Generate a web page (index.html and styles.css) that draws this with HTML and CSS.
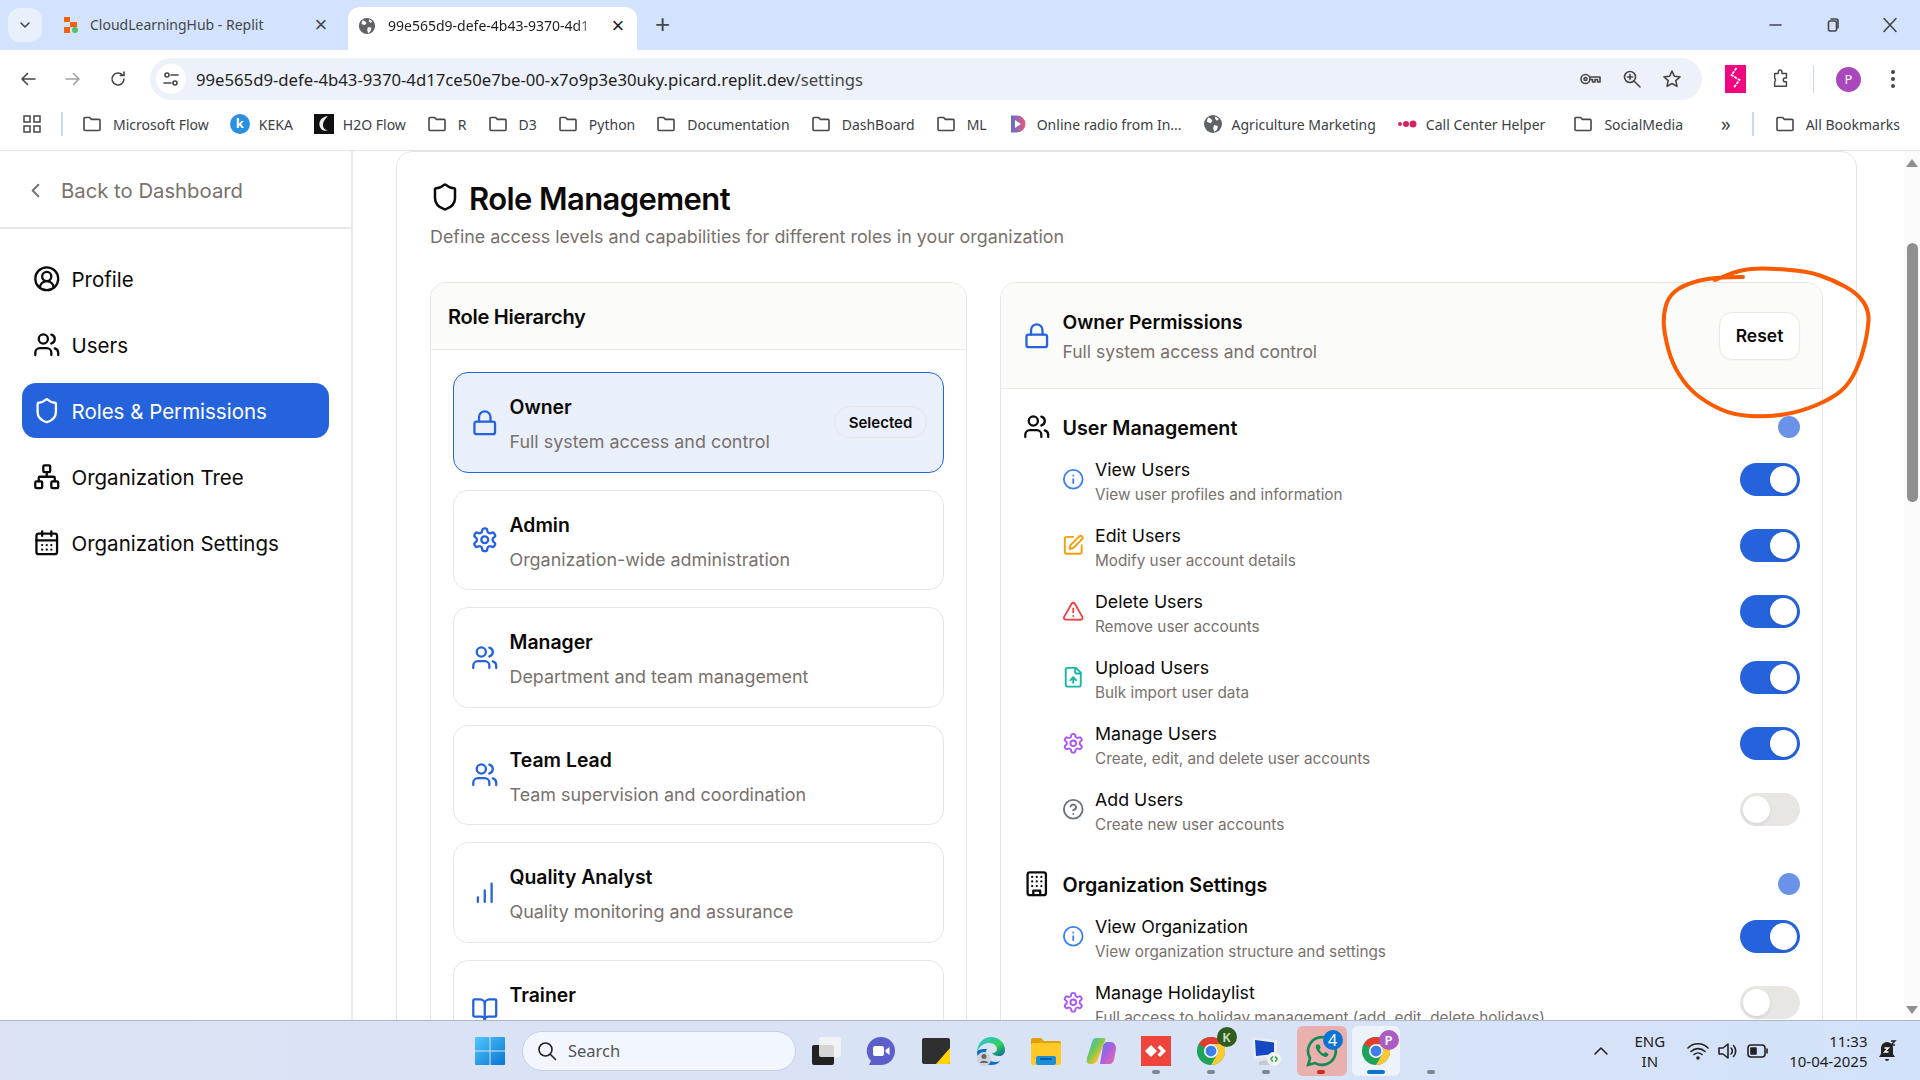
FILE: index.html
```html
<!DOCTYPE html>
<html lang="en">
<head>
<meta charset="utf-8">
<title>Role Management</title>
<link rel="stylesheet" href="styles.css">
</head>
<body>
<svg class="defs" width="0" height="0" aria-hidden="true">
  <symbol id="i-shield" viewBox="0 0 24 24"><path d="M20 13c0 5-3.5 7.5-7.66 8.95a1 1 0 0 1-.67-.01C7.5 20.5 4 18 4 13V6a1 1 0 0 1 1-1c2 0 4.5-1.2 6.24-2.72a1.17 1.17 0 0 1 1.52 0C14.51 3.81 17 5 19 5a1 1 0 0 1 1 1z"/></symbol>
  <symbol id="i-users" viewBox="0 0 24 24"><path d="M16 21v-2a4 4 0 0 0-4-4H6a4 4 0 0 0-4 4v2"/><circle cx="9" cy="7" r="4"/><path d="M22 21v-2a4 4 0 0 0-3-3.87"/><path d="M16 3.13a4 4 0 0 1 0 7.75"/></symbol>
  <symbol id="i-profile" viewBox="0 0 24 24"><path d="M18 20a6 6 0 0 0-12 0"/><circle cx="12" cy="10" r="4"/><circle cx="12" cy="12" r="10"/></symbol>
  <symbol id="i-network" viewBox="0 0 24 24"><rect x="16" y="16" width="6" height="6" rx="1"/><rect x="2" y="16" width="6" height="6" rx="1"/><rect x="9" y="2" width="6" height="6" rx="1"/><path d="M5 16v-3a1 1 0 0 1 1-1h12a1 1 0 0 1 1 1v3"/><path d="M12 12V8"/></symbol>
  <symbol id="i-calendar" viewBox="0 0 24 24"><path d="M8 2v4M16 2v4"/><rect x="3" y="4" width="18" height="18" rx="2"/><path d="M3 10h18M8 14h.01M12 14h.01M16 14h.01M8 18h.01M12 18h.01M16 18h.01"/></symbol>
  <symbol id="i-chevron" viewBox="0 0 24 24"><path d="m15 18-6-6 6-6"/></symbol>
  <symbol id="i-lock" viewBox="0 0 24 24"><rect x="3" y="11" width="18" height="11" rx="2" ry="2"/><path d="M7 11V7a5 5 0 0 1 10 0v4"/></symbol>
  <symbol id="i-gear" viewBox="0 0 24 24"><path d="M12.22 2h-.44a2 2 0 0 0-2 2v.18a2 2 0 0 1-1 1.73l-.43.25a2 2 0 0 1-2 0l-.15-.08a2 2 0 0 0-2.73.73l-.22.38a2 2 0 0 0 .73 2.73l.15.1a2 2 0 0 1 1 1.72v.51a2 2 0 0 1-1 1.74l-.15.09a2 2 0 0 0-.73 2.73l.22.38a2 2 0 0 0 2.73.73l.15-.08a2 2 0 0 1 2 0l.43.25a2 2 0 0 1 1 1.73V20a2 2 0 0 0 2 2h.44a2 2 0 0 0 2-2v-.18a2 2 0 0 1 1-1.73l.43-.25a2 2 0 0 1 2 0l.15.08a2 2 0 0 0 2.73-.73l.22-.39a2 2 0 0 0-.73-2.73l-.15-.08a2 2 0 0 1-1-1.74v-.5a2 2 0 0 1 1-1.74l.15-.09a2 2 0 0 0 .73-2.73l-.22-.38a2 2 0 0 0-2.73-.73l-.15.08a2 2 0 0 1-2 0l-.43-.25a2 2 0 0 1-1-1.73V4a2 2 0 0 0-2-2z"/><circle cx="12" cy="12" r="3"/></symbol>
  <symbol id="i-bars" viewBox="0 0 24 24"><path d="M12 20V10M18 20V4M6 20v-4"/></symbol>
  <symbol id="i-book" viewBox="0 0 24 24"><path d="M12 7v14"/><path d="M3 18a1 1 0 0 1-1-1V4a1 1 0 0 1 1-1h5a4 4 0 0 1 4 4 4 4 0 0 1 4-4h5a1 1 0 0 1 1 1v13a1 1 0 0 1-1 1h-6a3 3 0 0 0-3 3 3 3 0 0 0-3-3z"/></symbol>
  <symbol id="i-info" viewBox="0 0 24 24"><circle cx="12" cy="12" r="10"/><path d="M12 16v-4M12 8h.01"/></symbol>
  <symbol id="i-pen" viewBox="0 0 24 24"><path d="M12 3H5a2 2 0 0 0-2 2v14a2 2 0 0 0 2 2h14a2 2 0 0 0 2-2v-7"/><path d="M18.375 2.625a1 1 0 0 1 3 3l-9.013 9.014a2 2 0 0 1-.853.505l-2.873.84a.5.5 0 0 1-.62-.62l.84-2.873a2 2 0 0 1 .506-.852z"/></symbol>
  <symbol id="i-alert" viewBox="0 0 24 24"><path d="m21.73 18-8-14a2 2 0 0 0-3.48 0l-8 14A2 2 0 0 0 4 21h16a2 2 0 0 0 1.73-3"/><path d="M12 9v4M12 17h.01"/></symbol>
  <symbol id="i-fileup" viewBox="0 0 24 24"><path d="M15 2H6a2 2 0 0 0-2 2v16a2 2 0 0 0 2 2h12a2 2 0 0 0 2-2V7Z"/><path d="M14 2v4a2 2 0 0 0 2 2h4"/><path d="M12 12v6M15 15l-3-3-3 3"/></symbol>
  <symbol id="i-help" viewBox="0 0 24 24"><circle cx="12" cy="12" r="10"/><path d="M9.09 9a3 3 0 0 1 5.83 1c0 2-3 3-3 3M12 17h.01"/></symbol>
  <symbol id="i-building" viewBox="0 0 24 24"><rect x="4" y="2" width="16" height="20" rx="2"/><path d="M9 22v-4h6v4M8 6h.01M16 6h.01M12 6h.01M12 10h.01M12 14h.01M16 10h.01M16 14h.01M8 10h.01M8 14h.01"/></symbol>
  <symbol id="b-folder" viewBox="0 0 20 20"><path d="M2 4.5a1 1 0 0 1 1-1h4.6l1.8 1.9H17a1 1 0 0 1 1 1v9.1a1 1 0 0 1-1 1H3a1 1 0 0 1-1-1z"/></symbol>
  <symbol id="b-globe" viewBox="0 0 20 20"><circle cx="10" cy="10" r="9" fill="#5f6368"/><path d="M5 3.5l3 1.2 1.5 2.3-2 2.2-3.7-1.5zM11 11l4 1-1.2 4-2.6 2-1-3.5zM12.5 2.5l3.4 2.6-2 1.6-2-2.2z" fill="#fff"/></symbol>
  <symbol id="t-chrome" viewBox="0 0 32 32"><circle cx="16" cy="16" r="15" fill="#1fa25a"/><path d="M16 1a15 15 0 0 1 13 7.5H16a7.5 7.5 0 0 0-6.5 3.75L3 8.5A15 15 0 0 1 16 1z" fill="#e33b2e"/><path d="M29 8.500a15 15 0 0 1-13 22.500l6.500-11.250A7.500 7.500 0 0 0 16 8.500z" fill="#fcc934"/><circle cx="16" cy="16" r="7.500" fill="#fff"/><circle cx="16" cy="16" r="5.800" fill="#3f7ee8"/></symbol>
</svg>

<header class="tabstrip">
  <div class="tab-menu"><svg class="stroke-dark w14" viewBox="0 0 14 14"><path d="M3 5l4 4 4-4"/></svg></div>
  <div class="tab tab-inactive">
    <svg class="favicon" viewBox="0 0 16 18"><path d="M1 1h6v5H1zM7 6h7v5H7zM1 11h6v6H1z" fill="#f26207"/><circle cx="12" cy="14" r="3" fill="#4ec06f"/></svg>
    <span class="tab-title">CloudLearningHub - Replit</span>
    <span class="tab-x">×</span>
  </div>
  <div class="tab tab-active">
    <svg class="favicon fav-globe"><use href="#b-globe"/></svg>
    <span class="tab-title tab-fade">99e565d9-defe-4b43-9370-4d1</span>
    <span class="tab-x tab-x-dark">×</span>
  </div>
  <span class="tab-new">+</span>
  <div class="win-ctrls">
    <svg class="stroke-dark win-ic" viewBox="0 0 16 16"><path d="M2 8h11"/></svg>
    <svg class="stroke-dark win-ic" viewBox="0 0 16 16"><rect x="3.500" y="4" width="8" height="10" rx="1.500"/><path d="M6 2h5a2 2 0 0 1 2 2v7"/></svg>
    <svg class="stroke-dark win-ic" viewBox="0 0 16 16"><path d="M2 1.500l12 13M14 1.500l-12 13"/></svg>
  </div>
</header>

<div class="toolbar">
  <div class="nav-btns">
    <svg class="stroke-dark w20" viewBox="0 0 20 20"><path d="M17 10H4M9.500 4.500L4 10l5.500 5.500"/></svg>
    <svg class="stroke-grey w20" viewBox="0 0 20 20"><path d="M3 10h13M10.500 4.500L16 10l-5.500 5.500"/></svg>
    <svg class="stroke-dark w20" viewBox="0 0 20 20"><path d="M16 6.500V3M16 6.500h-3.500M16 10a6 6 0 1 1-1.600-4.100L16 6.500"/></svg>
  </div>
  <div class="omnibox">
    <span class="chip"><svg class="stroke-dark w18" viewBox="0 0 18 18"><circle cx="5" cy="5" r="2"/><path d="M9 5h7M2 13h7"/><circle cx="13" cy="13" r="2"/></svg></span>
    <span class="url">99e565d9-defe-4b43-9370-4d17ce50e7be-00-x7o9p3e30uky.picard.replit.dev<span class="url-path">/settings</span></span>
    <span class="omni-icons">
      <svg class="stroke-dark w24" viewBox="0 0 24 24"><circle cx="7.500" cy="12" r="4.500"/><circle cx="7.500" cy="12" r="1.500"/><path d="M12 10h10v5h-2.500v-2.500H17V15h-2.500v-2.500H12"/></svg>
      <svg class="stroke-dark w20" viewBox="0 0 20 20"><circle cx="8" cy="8" r="5.500"/><path d="M12 12l6 6M5.500 8h5M8 5.500v5"/></svg>
      <svg class="stroke-dark w20" viewBox="0 0 20 20"><path d="M10 2l2.400 5.300 5.600.6-4.200 3.800 1.200 5.700L10 14.500 5 17.400l1.200-5.700L2 7.900l5.600-.6z"/></svg>
    </span>
  </div>
  <div class="ext-icons">
    <span class="ext-pink"><svg class="ext-zig" viewBox="0 0 20 28"><path d="M11 3L6 10l8 5-6 8"/></svg></span>
    <svg class="stroke-dark w22 ext-puzzle" viewBox="0 0 22 22"><path d="M4 5h4V3a2 2 0 0 1 4 0v2h5v5h-1.500a2 2 0 0 0 0 4H17v5H4v-5a2.500 2.500 0 0 0 0-4z"/></svg>
    <span class="ext-div"></span>
    <span class="avatar">P</span>
    <svg class="kebab" viewBox="0 0 4 20"><circle cx="2" cy="3" r="2"/><circle cx="2" cy="10" r="2"/><circle cx="2" cy="17" r="2"/></svg>
  </div>
</div>

<nav class="bookmarks">
  <svg class="apps" viewBox="0 0 18 18"><rect x="1" y="1" width="6" height="6"/><rect x="11" y="1" width="6" height="6"/><rect x="1" y="11" width="6" height="6"/><rect x="11" y="11" width="6" height="6"/></svg>
  <span class="bm-div"></span>
  <span class="bm"><svg class="bm-folder"><use href="#b-folder"/></svg>Microsoft Flow</span>
  <span class="bm bm-fav"><span class="keka">k</span>KEKA</span>
  <span class="bm bm-fav"><svg class="bm-ico" viewBox="0 0 20 20"><rect width="20" height="20" fill="#111"/><path d="M14 2C7 3 4 8 6 13c1 3 5 5 8 3-3 0-5-2-5-5 0-4 3-7 5-9z" fill="#eee"/></svg>H2O Flow</span>
  <span class="bm"><svg class="bm-folder"><use href="#b-folder"/></svg>R</span>
  <span class="bm"><svg class="bm-folder"><use href="#b-folder"/></svg>D3</span>
  <span class="bm"><svg class="bm-folder"><use href="#b-folder"/></svg>Python</span>
  <span class="bm"><svg class="bm-folder"><use href="#b-folder"/></svg>Documentation</span>
  <span class="bm"><svg class="bm-folder"><use href="#b-folder"/></svg>DashBoard</span>
  <span class="bm"><svg class="bm-folder"><use href="#b-folder"/></svg>ML</span>
  <span class="bm bm-fav"><svg class="bm-ico" viewBox="0 0 20 20"><defs><linearGradient id="rg" x1="0" x2="1"><stop offset="0" stop-color="#5c6fd0"/><stop offset="1" stop-color="#ea5a7a"/></linearGradient></defs><path d="M3 1.500h6a8.500 8.500 0 0 1 0 17H3z" fill="url(#rg)"/><path d="M7 6l6 4-6 4z" fill="#fff"/></svg>Online radio from In...</span>
  <span class="bm bm-fav"><svg class="bm-ico"><use href="#b-globe"/></svg>Agriculture Marketing</span>
  <span class="bm bm-fav"><svg class="bm-ico" viewBox="0 0 20 20"><circle cx="3" cy="10" r="2" fill="#d6225f"/><circle cx="9" cy="10" r="3" fill="#d6225f"/><circle cx="16" cy="10" r="3.500" fill="#d6225f"/></svg>Call Center Helper</span>
  <span class="bm bm-social"><svg class="bm-folder"><use href="#b-folder"/></svg>SocialMedia</span>
  <span class="bm-more">»</span>
  <span class="bm-div bm-div-end"></span>
  <span class="bm"><svg class="bm-folder"><use href="#b-folder"/></svg>All Bookmarks</span>
</nav>

<div class="app">
  <aside class="sidebar">
    <div class="back"><svg class="ic ic-back"><use href="#i-chevron"/></svg><span>Back to Dashboard</span></div>
    <ul class="nav">
      <li class="nav-item"><svg class="ic ic-nav"><use href="#i-profile"/></svg><span class="nav-label">Profile</span></li>
      <li class="nav-item"><svg class="ic ic-nav"><use href="#i-users"/></svg><span class="nav-label">Users</span></li>
      <li class="nav-item active"><svg class="ic ic-nav"><use href="#i-shield"/></svg><span class="nav-label">Roles &amp; Permissions</span></li>
      <li class="nav-item"><svg class="ic ic-nav"><use href="#i-network"/></svg><span class="nav-label">Organization Tree</span></li>
      <li class="nav-item"><svg class="ic ic-nav"><use href="#i-calendar"/></svg><span class="nav-label">Organization Settings</span></li>
    </ul>
  </aside>

  <main class="main">
    <section class="page-card">
      <div class="page-head">
        <svg class="ic ic-page"><use href="#i-shield"/></svg>
        <h1>Role Management</h1>
      </div>
      <p class="page-sub">Define access levels and capabilities for different roles in your organization</p>

      <div class="columns">
        <div class="panel">
          <div class="panel-head roles-head"><h2>Role Hierarchy</h2></div>
          <div class="roles">
            <div class="role selected"><svg class="ic ic-role"><use href="#i-lock"/></svg><div class="role-text"><h3>Owner</h3><p>Full system access and control</p></div><span class="badge">Selected</span></div>
            <div class="role"><svg class="ic ic-role"><use href="#i-gear"/></svg><div class="role-text"><h3>Admin</h3><p>Organization-wide administration</p></div></div>
            <div class="role"><svg class="ic ic-role"><use href="#i-users"/></svg><div class="role-text"><h3>Manager</h3><p>Department and team management</p></div></div>
            <div class="role"><svg class="ic ic-role"><use href="#i-users"/></svg><div class="role-text"><h3>Team Lead</h3><p>Team supervision and coordination</p></div></div>
            <div class="role"><svg class="ic ic-role"><use href="#i-bars"/></svg><div class="role-text"><h3>Quality Analyst</h3><p>Quality monitoring and assurance</p></div></div>
            <div class="role"><svg class="ic ic-role"><use href="#i-book"/></svg><div class="role-text"><h3>Trainer</h3><p>Training and development</p></div></div>
          </div>
        </div>

        <div class="panel">
          <div class="panel-head perm-head">
            <svg class="ic ic-role"><use href="#i-lock"/></svg>
            <div class="perm-head-text"><h2>Owner Permissions</h2><p>Full system access and control</p></div>
            <button class="reset">Reset</button>
          </div>
          <div class="perm-body">
            <div class="perm-section">
              <div class="sec-head"><svg class="ic ic-role ic-dark"><use href="#i-users"/></svg><h3>User Management</h3><span class="dot"></span></div>
              <div class="perm"><svg class="ic ic-perm c-blue"><use href="#i-info"/></svg><div class="perm-text"><strong>View Users</strong><small>View user profiles and information</small></div><span class="toggle on"></span></div>
              <div class="perm"><svg class="ic ic-perm c-amber"><use href="#i-pen"/></svg><div class="perm-text"><strong>Edit Users</strong><small>Modify user account details</small></div><span class="toggle on"></span></div>
              <div class="perm"><svg class="ic ic-perm c-red"><use href="#i-alert"/></svg><div class="perm-text"><strong>Delete Users</strong><small>Remove user accounts</small></div><span class="toggle on"></span></div>
              <div class="perm"><svg class="ic ic-perm c-teal"><use href="#i-fileup"/></svg><div class="perm-text"><strong>Upload Users</strong><small>Bulk import user data</small></div><span class="toggle on"></span></div>
              <div class="perm"><svg class="ic ic-perm c-purple"><use href="#i-gear"/></svg><div class="perm-text"><strong>Manage Users</strong><small>Create, edit, and delete user accounts</small></div><span class="toggle on"></span></div>
              <div class="perm"><svg class="ic ic-perm c-grey"><use href="#i-help"/></svg><div class="perm-text"><strong>Add Users</strong><small>Create new user accounts</small></div><span class="toggle"></span></div>
            </div>
            <div class="perm-section">
              <div class="sec-head"><svg class="ic ic-role ic-dark"><use href="#i-building"/></svg><h3>Organization Settings</h3><span class="dot"></span></div>
              <div class="perm"><svg class="ic ic-perm c-blue"><use href="#i-info"/></svg><div class="perm-text"><strong>View Organization</strong><small>View organization structure and settings</small></div><span class="toggle on"></span></div>
              <div class="perm"><svg class="ic ic-perm c-purple"><use href="#i-gear"/></svg><div class="perm-text"><strong>Manage Holidaylist</strong><small>Full access to holiday management (add, edit, delete holidays)</small></div><span class="toggle"></span></div>
            </div>
          </div>
        </div>
      </div>
    </section>
  </main>

  <div class="scrollbar">
    <span class="arrow-up"></span>
    <span class="thumb"></span>
    <span class="arrow-down"></span>
  </div>
</div>

<footer class="taskbar">
  <div class="task-center">
    <svg class="t-win" viewBox="0 0 30 30"><defs><linearGradient id="wg" x1="0" y1="0" x2="1" y2="1"><stop offset="0" stop-color="#4fc8fb"/><stop offset="1" stop-color="#0a74d4"/></linearGradient></defs><path d="M1 1h13.500v13.500H0V2a1 1 0 0 1 1-1zM15.500 1H29a1 1 0 0 1 1 1v12.500H15.500zM0 15.500h14.500V29H1a1 1 0 0 1-1-1zM15.500 15.500H30V28a1 1 0 0 1-1 1H15.500z" fill="url(#wg)"/></svg>
    <div class="t-search"><svg class="stroke-black w20" viewBox="0 0 20 20"><circle cx="8.500" cy="8.500" r="6.500"/><path d="M13 13l5.500 5.500"/></svg><span>Search</span></div>
    <svg class="t-ic" viewBox="0 0 30 30"><rect x="1" y="9" width="22" height="20" rx="2" fill="#222"/><rect x="8" y="1" width="22" height="20" rx="2" fill="#f4f4f4" opacity=".85"/></svg>
    <svg class="t-ic" viewBox="0 0 30 30"><path d="M15 1a14 14 0 0 1 0 28H3l2-4A14 14 0 0 1 15 1z" fill="#5b5fc7"/><rect x="7" y="10" width="11" height="10" rx="2" fill="#fff"/><path d="M19.500 14l4-3v8l-4-3z" fill="#fff"/></svg>
    <svg class="t-ic" viewBox="0 0 30 30"><rect x="1" y="2" width="28" height="26" rx="2" fill="#2f2f2f"/><path d="M29 12v14a2 2 0 0 1-2 2H15z" fill="#ffd400"/></svg>
    <svg class="t-ic" viewBox="0 0 30 30"><defs><linearGradient id="eg" x1="0" y1="0" x2="1" y2="1"><stop offset="0" stop-color="#35c1f1"/><stop offset=".6" stop-color="#30d158"/><stop offset="1" stop-color="#0c59a4"/></linearGradient></defs><path d="M15 1c8 0 14 6 14 13 0 4-3 6-6 6-4 0-6-1-7-3 3 0 5-2 5-4 0-3-3-6-8-6C7 7 2 12 1 16 1 8 7 1 15 1z" fill="url(#eg)"/><path d="M1 16c0 7 6 13 14 13 4 0 7-1 9-4-4 2-10 1-13-3-2-3-2-6 0-9-5 0-9 0-10 3z" fill="#0f6fc5"/><circle cx="8" cy="23" r="7" fill="#cfd3dc"/><circle cx="8" cy="20.500" r="2.500" fill="#666"/><path d="M3.500 27a5 4 0 0 1 9 0z" fill="#666"/></svg>
    <svg class="t-ic" viewBox="0 0 30 30"><path d="M0 4a2 2 0 0 1 2-2h8l3 3h15a2 2 0 0 1 2 2v5H0z" fill="#e0a008"/><rect y="7" width="30" height="22" rx="2" fill="#ffca28"/><rect x="5" y="20" width="20" height="9" rx="2" fill="#1a8fd8"/><rect x="9" y="22" width="12" height="2" fill="#0b5ea8"/></svg>
    <svg class="t-ic" viewBox="0 0 30 30"><defs><linearGradient id="cg" x1="0" y1="0" x2="1" y2="1"><stop offset="0" stop-color="#3ab7f0"/><stop offset=".45" stop-color="#78c850"/><stop offset=".7" stop-color="#f7c12f"/><stop offset="1" stop-color="#e7486d"/></linearGradient><linearGradient id="cg2" x1="0" y1="0" x2="1" y2="1"><stop offset="0" stop-color="#4a7df0"/><stop offset=".5" stop-color="#b05ee0"/><stop offset="1" stop-color="#f0709a"/></linearGradient></defs><path d="M10 2h8c1 0 2 1 1 3l-7 18c-1 3-3 5-6 5H4c-3 0-4-3-3-6L6 6c1-3 2-4 4-4z" fill="url(#cg)"/><path d="M14 28h10c2 0 3-2 4-4l2-11c0-4-2-7-5-7h-4c-2 0-3 2-4 4z" fill="url(#cg2)"/></svg>
    <svg class="t-ic" viewBox="0 0 30 30"><rect width="30" height="30" fill="#ef443b"/><path d="M10 9l6 6-6 6-6-6z M19 9l6 6-6 6-2.500-2.500 3.500-3.500-3.500-3.500z" fill="#fff"/></svg>
    <span class="t-badged">
      <svg class="t-ic"><use href="#t-chrome"/></svg>
      <span class="t-badge t-k">K</span>
    </span>
    <svg class="t-ic" viewBox="0 0 30 30"><path d="M1 1l25 3v17L3 23z" fill="#e8ebf2"/><path d="M4 4l19 2.500V18L5 20z" fill="#1447c0"/><path d="M8 26c4-2 9-2 13 0v3H8z" fill="#c8c8c8"/><circle cx="23" cy="23" r="7" fill="#f1f3f1"/><path d="M19.500 23l2.500-2.500M19.500 23l2.500 2.500M26.500 23L24 20.500M26.500 23L24 25.500" stroke="#2aa04a" stroke-width="1.500"/></svg>
    <span class="t-box t-box-red">
      <svg class="t-wa" viewBox="0 0 30 30"><path d="M15 2a13 13 0 1 1-6.500 24.300L2 28l1.800-6.300A13 13 0 0 1 15 2z" fill="none" stroke="#128c55" stroke-width="2.500"/><path d="M10 9c-1 1-1.500 3 1 6.500s6 5.500 8 5c1.500-.4 2.500-2 2-3l-3-1.500-1.500 1.500c-1.500-.5-3.500-2.500-4-4l1.300-1.500L12.500 9z" fill="#128c55"/></svg>
      <span class="t-badge t-four">4</span>
    </span>
    <span class="t-box t-box-active">
      <svg class="t-ic"><use href="#t-chrome"/></svg>
      <span class="t-badge t-p">P</span>
    </span>
  </div>
  <div class="t-pins">
    <i class="pin pin-1"></i><i class="pin pin-2"></i><i class="pin pin-3"></i><i class="pin pin-red"></i><i class="pin pin-blue"></i><i class="pin pin-6"></i>
  </div>
  <div class="tray">
    <svg class="stroke-black w16" viewBox="0 0 16 16"><path d="M2 11l6-6 6 6"/></svg>
    <div class="lang">ENG<br>IN</div>
    <svg class="stroke-black w22" viewBox="0 0 22 20"><path d="M1 7a14 14 0 0 1 20 0M4 10.500a10 10 0 0 1 14 0M7 13.500a6 6 0 0 1 8 0"/><circle cx="11" cy="17" r="1" /></svg>
    <svg class="stroke-black w22" viewBox="0 0 22 20"><path d="M2 7h4l5-4v14l-5-4H2zM14 7a4 4 0 0 1 0 6M16.500 4.500a8 8 0 0 1 0 11"/></svg>
    <svg class="stroke-black w22" viewBox="0 0 22 20"><rect x="1" y="4" width="17" height="12" rx="3"/><rect x="4" y="7" width="5" height="6" fill="#222"/><path d="M20 8v4"/></svg>
    <div class="clock">11:33<br>10-04-2025</div>
    <svg class="t-bell" viewBox="0 0 20 24"><path d="M9 3a6 6 0 0 1 6 6v6l2 3H1l2-3V9a6 6 0 0 1 6-6zM7 20h4a2 2 0 0 1-4 0z" fill="#222"/><path d="M6.500 9h4l-4 4h4" stroke="#fff" stroke-width="1.300" fill="none"/><path d="M13 2h4l-4 4h4" stroke="#222" stroke-width="1.400" fill="none"/></svg>
  </div>
</footer>

<svg class="annotation" viewBox="0 0 1920 1080" aria-hidden="true"><path d="M1715 280 L1727 275 Q1740 270 1751 269 Q1763 268 1785 269.500 Q1807 271 1820 275.500 Q1833 280 1845 286.500 Q1857 293 1863 301.500 Q1869 310 1868.500 320 Q1868 330 1865 343.500 Q1862 357 1856 370 Q1850 383 1841.500 390.500 Q1833 398 1816.500 405 Q1800 412 1783.500 414.500 Q1767 417 1750 416 Q1733 415 1720 409 Q1707 403 1697 395 Q1687 387 1679.500 375 Q1672 363 1668.500 350 Q1665 337 1664 327 Q1663 317 1665.500 307 Q1668 297 1675.500 291 Q1683 285 1698 281 Q1713 277 1743 277"/></svg>
</body>
</html>
```
FILE: styles.css
```css
* { box-sizing: border-box; }
html, body { height: 100%; }
body {
  margin: 0;
  height: 1080px;
  overflow: hidden;
  display: flex;
  flex-direction: column;
  font-family: Inter, "Noto Sans", sans-serif;
  color: #0c0a09;
  background: #fff;
}
h1, h2, h3, p, ul { margin: 0; padding: 0; }
ul { list-style: none; }
.defs { position: absolute; }

.stroke-dark, .stroke-grey, .stroke-black { fill: none; stroke-width: 1.6; stroke-linecap: round; stroke-linejoin: round; }
.stroke-dark { stroke: #444746; }
.stroke-grey { stroke: #a0a3a6; }
.stroke-black { stroke: #222; }
.w14 { width: 14px; height: 14px; }
.w16 { width: 16px; height: 16px; }
.w18 { width: 18px; height: 18px; }
.w20 { width: 20px; height: 20px; }
.w22 { width: 22px; height: 20px; }
.w24 { width: 24px; height: 24px; }

/* Browser tab strip */
.tabstrip {
  height: 50px;
  flex: none;
  background: #d3e3fd;
  display: flex;
  align-items: flex-end;
  padding-left: 8px;
  font-family: "Noto Sans", sans-serif;
  font-size: 14px;
}
.tab-menu {
  width: 34px; height: 34px;
  margin-bottom: 8px;
  border-radius: 12px;
  background: #e8f0fe;
  display: flex; align-items: center; justify-content: center;
}
.tab { height: 43px; display: flex; align-items: center; }
.tab-inactive { width: 306px; padding: 0 15px 8px 21px; color: #444746; }
.tab-active { width: 289px; padding: 0 7px 6px 10px; background: #fff; border-radius: 12px 12px 0 0; color: #1f1f1f; }
.favicon { width: 16px; height: 18px; flex: none; margin-right: 11px; }
.fav-globe { width: 18px; height: 18px; margin-right: 12px; }
.tab-title { flex: 1; white-space: nowrap; }
.tab-fade { -webkit-mask-image: linear-gradient(90deg, #000 88%, transparent); mask-image: linear-gradient(90deg, #000 88%, transparent); }
.tab-x { font-size: 22px; width: 24px; text-align: center; color: #444746; line-height: 1; font-family: "Liberation Sans", sans-serif; margin-left: 4px; }
.tab-x-dark { color: #1f1f1f; }
.tab-new { font-size: 26px; color: #444746; margin: 0 0 13px 18px; line-height: 1; font-family: "Liberation Sans", sans-serif; font-weight: 300; }
.win-ctrls { margin-left: auto; display: flex; gap: 41px; padding: 0 22px 17px 0; }
.win-ic { width: 16px; height: 16px; }

/* Address bar */
.toolbar {
  height: 58px;
  flex: none;
  display: flex;
  align-items: center;
  background: #fff;
  padding-left: 18px;
  font-family: "Noto Sans", sans-serif;
}
.nav-btns { display: flex; gap: 25px; width: 132px; flex: none; }
.omnibox {
  width: 1552px; height: 42px;
  flex: none;
  border-radius: 21px;
  background: #ecf1fa;
  display: flex; align-items: center;
  padding-left: 6px;
}
.chip {
  width: 30px; height: 30px; border-radius: 50%;
  background: #fff;
  display: flex; align-items: center; justify-content: center;
  margin-right: 10px;
}
.url { font-size: 16.700px; color: #1f1f1f; white-space: nowrap; }
.url-path { color: #474747; }
.omni-icons { margin-left: auto; display: flex; align-items: center; gap: 20px; padding-right: 20px; }
.ext-icons { display: flex; align-items: center; padding-left: 23px; }
.ext-pink { width: 21px; height: 28px; background: #f0047f; display: flex; flex: none; }
.ext-zig { width: 21px; height: 28px; fill: none; stroke: #fff; stroke-width: 1.800; stroke-dasharray: 3 1; }
.ext-puzzle { margin-left: 24px; }
.ext-div { width: 1px; height: 28px; background: #c7d9f5; margin: 0 22px 0 21px; }
.avatar {
  width: 25px; height: 25px; border-radius: 50%;
  background: #ab47bc; color: #fff;
  font-size: 13px; line-height: 25px; text-align: center;
}
.kebab { width: 4px; height: 20px; fill: #444746; margin-left: 30px; }

/* Bookmarks bar */
.bookmarks {
  height: 43px;
  flex: none;
  display: flex;
  align-items: center;
  gap: 21px;
  padding: 0 0 10px 23px;
  background: #fff;
  border-bottom: 1px solid #e2e2e2;
  font-family: "Noto Sans", sans-serif;
  font-size: 14px;
  color: #3c4043;
  white-space: nowrap;
}
.apps { width: 18px; height: 18px; fill: none; stroke: #444746; stroke-width: 1.500; flex: none; }
.bm-div { width: 2px; height: 24px; background: #c7d9f5; margin: 0 -2px 0 -1px; flex: none; }
.bm { display: flex; align-items: center; gap: 11px; }
.bm-fav { gap: 9px; }
.bm-social { margin-left: 7px; }
.bm-folder { width: 20px; height: 20px; fill: none; stroke: #444746; stroke-width: 1.600; flex: none; }
.bm-ico { width: 20px; height: 20px; flex: none; }
.keka {
  width: 20px; height: 20px; border-radius: 50%;
  background: #2a8fe0; color: #fff;
  font-weight: 700; font-size: 13px; line-height: 19px; text-align: center;
}
.bm-more { font-size: 19px; margin-left: 17px; line-height: 1; }
.bm-div-end { margin: 0; }

/* App area */
.app { flex: 1; min-height: 0; display: flex; overflow: hidden; background: #fff; }

.ic { fill: none; stroke: currentColor; stroke-width: 2; stroke-linecap: round; stroke-linejoin: round; flex: none; }

.sidebar { width: 353px; flex: none; border-right: 2px solid #e8e8e8; }
.back {
  height: 78px;
  display: flex; align-items: center;
  padding: 2px 0 0 24px;
  gap: 14px;
  border-bottom: 2px solid #e8e8e8;
  font-size: 20.300px;
  color: #78716c;
}
.ic-back { width: 23px; height: 23px; }
.nav { padding: 22px 22px; display: flex; flex-direction: column; gap: 11px; }
.nav-item {
  height: 55px;
  display: flex; align-items: center;
  gap: 11px;
  padding-left: 11px;
  border-radius: 14px;
  font-size: 20.500px;
  color: #0c0a09;
}
.nav-label { padding-top: 2px; }
.nav-item.active { background: #2563dc; color: #fff; }
.ic-nav { width: 27.5px; height: 27.5px; }

.main { flex: 1; min-width: 0; padding-left: 43px; overflow: hidden; }
.page-card {
  width: 1461px;
  border: 1.500px solid #e7e5e4;
  border-radius: 16px;
  padding: 27px 33px 0;
  min-height: 1200px;
}
.page-head { display: flex; align-items: center; gap: 9px; height: 40px; }
.ic-page { width: 30px; height: 30px; margin-top: -4px; }
h1 { font-size: 31px; font-weight: 600; letter-spacing: -0.6px; margin-top: -2px; }
.page-sub { font-size: 17.900px; color: #78716c; line-height: 28px; margin-top: 4px; }

.columns { display: grid; grid-template-columns: 537px 823px; gap: 33px; margin-top: 31px; align-items: start; }
.panel { border: 1.500px solid #e7e5e4; border-radius: 16px; overflow: hidden; }
.panel-head { background: #fbfbf9; border-bottom: 1.500px solid #ebeae8; }
.roles-head { height: 67px; display: flex; align-items: center; padding: 1px 0 0 17px; }
h2 { font-size: 20.100px; font-weight: 600; letter-spacing: -0.3px; }
.roles { padding: 22px 22px; display: flex; flex-direction: column; gap: 17px; }
.role {
  height: 100.500px;
  display: flex; align-items: center;
  gap: 11px;
  padding: 0 16px 0 17px;
  border: 1.500px solid #e7e5e4;
  border-radius: 15px;
}
.role.selected { background: #e9effb; border-color: #2563dc; }
.ic-role { width: 27.500px; height: 27.500px; color: #2563dc; }
.ic-dark { color: #0c0a09; }
.role-text { flex: 1; padding-top: 5px; }
.role-text h3 { font-size: 19.400px; font-weight: 600; line-height: 29px; }
.role-text p { font-size: 17.900px; color: #78716c; line-height: 28px; margin-top: 6px; }
.badge {
  height: 32px; width: 93px;
  border: 1.500px solid #e7e5e4;
  border-radius: 16px;
  font-size: 15px; font-weight: 600;
  display: flex; align-items: center; justify-content: center;
}

.perm-head { height: 106px; display: flex; align-items: center; padding: 0 22px 0 22px; gap: 12px; }
.perm-head-text { flex: 1; padding-top: 1px; }
.perm-head-text h2 { line-height: 30px; font-size: 19.200px; letter-spacing: 0; }
.perm-head-text p { font-size: 17.500px; color: #78716c; line-height: 28px; margin-top: 1px; }
.reset {
  width: 81px; height: 48px;
  background: #fff;
  border: 1.500px solid #e9e8e6;
  border-radius: 13px;
  font: 600 17.500px Inter, sans-serif;
  color: #0c0a09;
  box-shadow: 0 1px 2px rgba(0,0,0,.04);
}

.perm-body { padding: 19px 22px 0 22px; display: flex; flex-direction: column; gap: 23px; }
.sec-head { height: 38px; display: flex; align-items: center; gap: 12px; }
.sec-head h3 { flex: 1; font-size: 19.700px; font-weight: 600; padding-top: 1px; }
.dot { width: 22px; height: 22px; border-radius: 50%; background: #6a93e8; }
.perm { height: 66px; display: flex; align-items: center; padding-left: 39px; gap: 10.500px; }
.ic-perm { width: 22.500px; height: 22.500px; }
.perm-text { flex: 1; display: flex; flex-direction: column; padding-top: 5px; }
.perm-text strong { font-weight: 400; font-size: 17.800px; line-height: 25px; }
.perm-text small { font-size: 15.300px; color: #78716c; line-height: 25px; }
.c-blue { color: #3b82f6; }
.c-amber { color: #f59e0b; }
.c-red { color: #ef4444; }
.c-teal { color: #14b8a6; }
.c-purple { color: #a855f7; }
.c-grey { color: #6b7280; }
.toggle {
  width: 60px; height: 33px;
  border-radius: 17px;
  background: #e8e6e3;
  display: flex; align-items: center; padding: 0 3px;
  flex: none;
}
.toggle::before { content: ""; width: 27px; height: 27px; border-radius: 50%; background: #fff; box-shadow: 0 2px 4px rgba(0,0,0,.08); }
.toggle.on { background: #2563dc; justify-content: flex-end; }

.scrollbar { width: 16px; flex: none; background: #fbfbfb; display: flex; flex-direction: column; align-items: center; padding-top: 8px; }
.arrow-up, .arrow-down { width: 0; height: 0; border-left: 6px solid transparent; border-right: 6px solid transparent; }
.arrow-up { border-bottom: 8px solid #8f8f8f; }
.arrow-down { border-top: 8px solid #8f8f8f; margin-top: auto; margin-bottom: 6px; }
.thumb { width: 11px; height: 259px; margin-top: 76px; border-radius: 6px; background: #8f8f8f; }

/* Taskbar */
.taskbar {
  height: 60px;
  flex: none;
  position: relative;
  display: flex;
  align-items: center;
  justify-content: space-between;
  background: linear-gradient(90deg, #dbe3f5 0%, #d9e3f6 60%, #d3e2fa 100%);
  border-top: 1px solid #aeb6cb;
  padding-left: 475px;
}
.task-center { display: flex; align-items: center; }
.t-win { width: 30px; height: 30px; margin-right: 17px; }
.t-search {
  width: 274px; height: 40px;
  margin-right: 2.500px;
  border-radius: 20px;
  background: #f2f6fe;
  border: 1px solid #c9cfdf;
  display: flex; align-items: center; gap: 11px;
  padding-left: 14px;
  font: 16.500px "Noto Sans", sans-serif;
  color: #555;
}
.t-ic { width: 30px; height: 30px; margin: 0 12.500px; flex: none; }
.t-badged { position: relative; display: flex; }
.t-badge {
  position: absolute;
  width: 20px; height: 20px; border-radius: 50%;
  color: #fff; font: 13px/20px "Noto Sans", sans-serif; text-align: center;
}
.t-k { background: #2f5d1e; color: #cfe0c5; top: -9px; right: 2px; font-weight: 600; }
.t-box { position: relative; width: 50px; height: 50px; border-radius: 6px; display: flex; align-items: center; justify-content: center; }
.t-box .t-ic { margin: 0; }
.t-box-red { background: #e9b0ae; margin: 0 5px 0 3px; }
.t-box-active { background: #edf2fb; width: 48px; }
.t-wa { width: 32px; height: 32px; }
.t-four { background: #0a74d4; top: 4px; right: 4px; font-size: 16px; }
.t-p { background: #ab5bc4; top: 4px; right: 1px; font-weight: 600; }
.t-pins { position: absolute; left: 0; right: 0; bottom: 6px; height: 4px; }
.pin { position: absolute; top: 0; width: 8px; height: 4px; border-radius: 2px; background: #7f8691; }
.pin-1 { left: 1152px; }
.pin-2 { left: 1207px; }
.pin-3 { left: 1262px; }
.pin-red { left: 1317px; background: #c92a20; }
.pin-blue { left: 1367px; width: 18px; background: #0a74d4; }
.pin-6 { left: 1427px; }
.tray { display: flex; align-items: center; padding-right: 22.500px; font: 15px/20px "Noto Sans", sans-serif; color: #1c1c1c; }
.lang { text-align: center; margin: 0 22px 0 26px; }
.tray .w22 { margin-right: 8px; }
.clock { text-align: right; margin: 0 10px 0 12px; }
.t-bell { width: 20px; height: 24px; }

.annotation { position: absolute; left: 0; top: 0; width: 1920px; height: 1080px; pointer-events: none; fill: none; stroke: #fb5a00; stroke-width: 4px; stroke-linecap: round; stroke-linejoin: round; }
```
